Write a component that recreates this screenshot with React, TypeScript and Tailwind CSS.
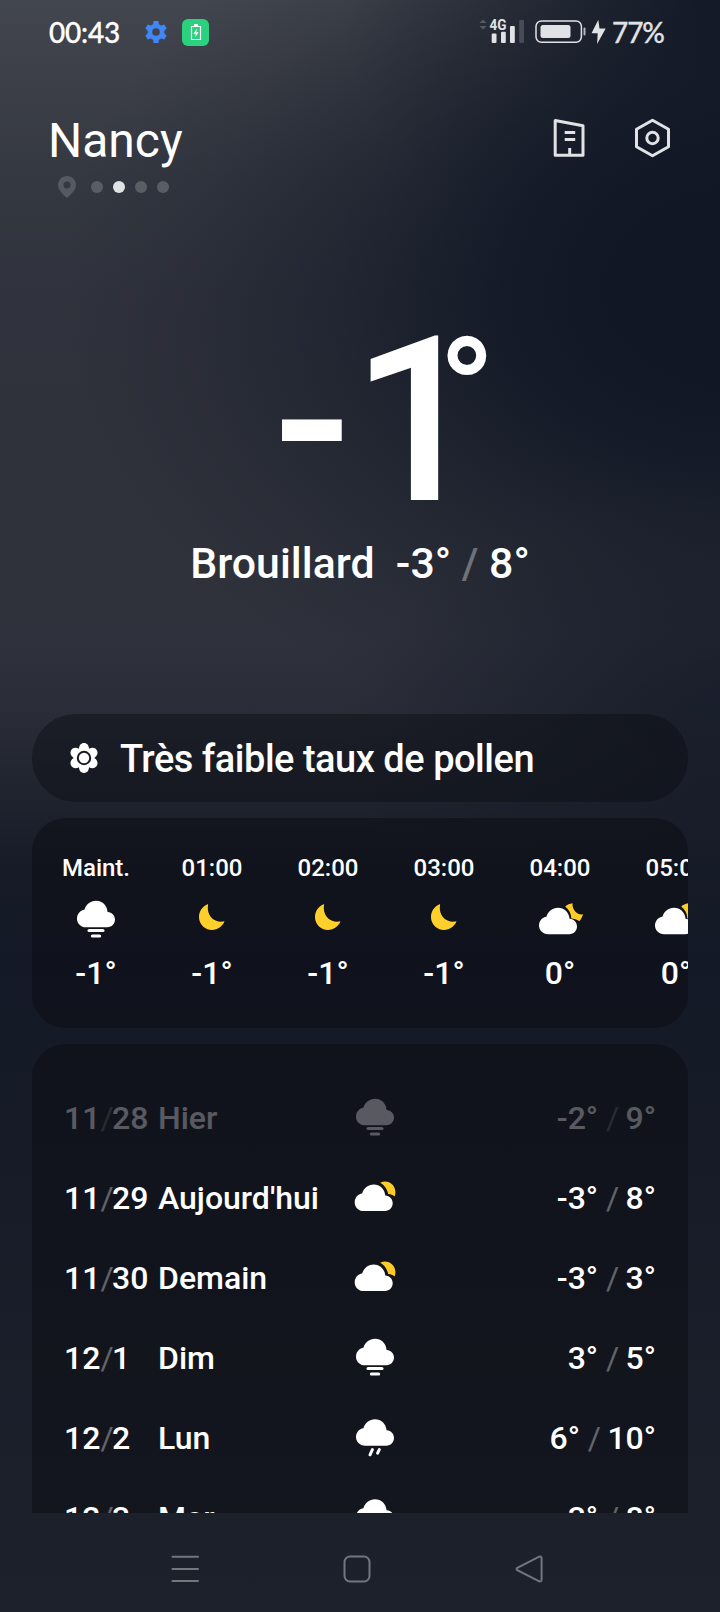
import type { ReactNode } from "react";

type IconKind = "fog" | "moon" | "cloudMoon" | "cloudSun" | "rain";

const CLOUD =
  "M9.2 26.5 C3.6 26.5 0 22.6 0 17.9 C0 13.1 3.2 9.6 7.4 9 C9.1 3.7 13.4 0 19 0 C25.2 0 30 4.6 30.6 11.1 C35.1 11.3 38 14.7 38 18.8 C38 23.2 34.6 26.5 30.4 26.5 Z";

function WeatherIcon({ kind }: { kind: IconKind }) {
  let body: ReactNode = null;
  if (kind === "fog") {
    body = (
      <g fill="#fff">
        <path d={CLOUD} transform="translate(5 4.8)" />
        <rect x="15.5" y="33.1" width="17" height="3" rx="1.5" />
        <rect x="18.8" y="38.6" width="10.4" height="3" rx="1.5" />
      </g>
    );
  } else if (kind === "moon") {
    body = (
      <path
        fill="#ffd02b"
        d="M20.1 8 C14.700 10 11 15.100 11 21 C11 28.300 16.800 34 24 34 C29.600 34 34.500 30.600 36.500 25.300 C28.300 27.500 17.800 21.500 20.100 8 Z"
      />
    );
  } else if (kind === "cloudMoon") {
    body = (
      <g>
        <path
          fill="#ffcb26"
          d="M29.200 10.600 C31.200 8.700 33.700 7.500 36.600 7.200 C35.800 12.800 40.500 19.300 47 18.300 C46.300 21 45 23.300 43.300 25.300 C41 23.200 38 22.600 35.300 22.500 C35.200 17.500 33 13.500 29.200 10.600 Z"
        />
        <path fill="#fff" d={CLOUD} transform="translate(3 11.700)" />
      </g>
    );
  } else if (kind === "cloudSun") {
    body = (
      <g>
        <path
          fill="#ffcb26"
          d="M29.200 8.700 C36.500 5.200 44.400 10.200 44.400 18.300 C44.400 19.800 44.200 21 43.800 22.500 C42 21 40 20.300 37.200 20.100 C36.200 15 33.500 11 29.200 8.700 Z"
        />
        <path fill="#fff" d={CLOUD} transform="translate(3.700 10.500)" />
      </g>
    );
  } else {
    body = (
      <g>
        <path fill="#fff" d={CLOUD} transform="translate(5 5.200)" />
        <path d="M21.400 35.600 L19 40.800 M28.300 35.600 L26.600 39.200" stroke="#fff" strokeWidth="3" strokeLinecap="round" />
      </g>
    );
  }
  return (
    <svg className="block h-12 w-12 shrink-0" viewBox="0 0 48 48" fill="none">
      {body}
    </svg>
  );
}

const hours: { time: string; icon: IconKind; temp: string }[] = [
  { time: "Maint.", icon: "fog", temp: "-1°" },
  { time: "01:00", icon: "moon", temp: "-1°" },
  { time: "02:00", icon: "moon", temp: "-1°" },
  { time: "03:00", icon: "moon", temp: "-1°" },
  { time: "04:00", icon: "cloudMoon", temp: "0°" },
  { time: "05:00", icon: "cloudMoon", temp: "0°" },
];

const days: { month: string; day: string; name: string; icon: IconKind; low: string; high: string; past?: boolean }[] = [
  { month: "11", day: "28", name: "Hier", icon: "fog", low: "-2°", high: "9°", past: true },
  { month: "11", day: "29", name: "Aujourd'hui", icon: "cloudSun", low: "-3°", high: "8°" },
  { month: "11", day: "30", name: "Demain", icon: "cloudSun", low: "-3°", high: "3°" },
  { month: "12", day: "1", name: "Dim", icon: "fog", low: "3°", high: "5°" },
  { month: "12", day: "2", name: "Lun", icon: "rain", low: "6°", high: "10°" },
  { month: "12", day: "3", name: "Mar", icon: "rain", low: "3°", high: "8°" },
];

function Backdrop() {
  return (
    <>
      <div className="absolute inset-0 bg-[linear-gradient(180deg,#42464e_0px,#3e4149_60px,#343841_180px,#30333d_300px,#2f323b_400px,#2f323c_640px,#2a2d38_710px,#20242f_790px,#161b27_870px,#131926_960px,#181c28_1200px,#1c202b_1500px,#1d212c_1612px)]" />
      <div className="absolute inset-0 bg-[radial-gradient(420px_240px_at_760px_740px,rgba(21,26,39,0.7)_20%,rgba(21,26,39,0.35)_60%,transparent_100%)]" />
      <div className="absolute inset-0 bg-[radial-gradient(420px_320px_at_760px_0px,rgba(20,26,38,0.9)_15%,rgba(20,26,38,0.35)_60%,transparent_100%)]" />
      <div className="absolute inset-0 bg-[radial-gradient(690px_480px_at_750px_290px,#111725_20%,rgba(16,22,36,0.85)_35%,rgba(16,22,36,0.45)_60%,rgba(16,22,36,0.16)_82%,transparent_100%)]" />
    </>
  );
}

function StatusBar() {
  return (
    <div className="flex h-16 items-center pl-[49px] font-[Lato,sans-serif]">
      <span className="w-[95px] text-[28px] leading-8 font-medium tracking-[-0.2px] text-white [-webkit-text-stroke:0.3px_#fff]">00:43</span>
      <svg className="h-6 w-6" viewBox="0 0 24 24">
        <path
          fill="#4285f4"
          fillRule="evenodd"
          d="M9.600 1 H14.400 L15 4.200 L17.200 5.500 L20.300 4.400 L22.700 8.600 L20.300 10.700 V13.300 L22.700 15.400 L20.300 19.600 L17.200 18.500 L15 19.800 L14.400 23 H9.600 L9 19.800 L6.800 18.500 L3.700 19.600 L1.300 15.400 L3.700 13.300 V10.700 L1.300 8.600 L3.700 4.400 L6.800 5.500 L9 4.200 Z M12 8.200 A3.800 3.800 0 1 0 12 15.800 A3.800 3.800 0 1 0 12 8.200 Z"
        />
      </svg>
      <span className="ml-[14px] flex h-[27px] w-[27px] items-center justify-center rounded-md bg-[#2bd17e]">
        <svg className="h-[18px] w-3" viewBox="0 0 12 18" fill="none">
          <path d="M1.500 3.500 H10.500 V16.500 H1.500 Z" stroke="#fff" strokeWidth="1.200" />
          <path d="M4 1 H8 V3 H4 Z M6.800 5.800 L3.400 10.700 H5.700 L5.200 14 L8.600 9.300 H6.300 Z" fill="#fff" />
        </svg>
      </span>
      <svg className="ml-[270px] h-7 w-[46px]" viewBox="0 0 46 28">
        <path d="M0.300 5 L4 1.400 L7.700 5 Z M0.300 8 L4 11.600 L7.700 8 Z" fill="#555a63" />
        <text x="10.500" y="12" fill="#e1e2e5" fontFamily="Roboto, sans-serif" fontSize="15.500" fontWeight="700" textLength="17" lengthAdjust="spacingAndGlyphs">
          4G
        </text>
        <rect x="12.700" y="15.500" width="4.800" height="9.500" rx="1" fill="#e1e2e5" />
        <rect x="22" y="13.800" width="4.800" height="11.200" rx="1" fill="#e1e2e5" />
        <rect x="31" y="8" width="4.800" height="17" rx="1" fill="#e1e2e5" />
        <rect x="40.200" y="2" width="4.800" height="23" rx="1" fill="#484c56" />
      </svg>
      <svg className="ml-[10px] h-7 w-[72px]" viewBox="0 0 72 28" fill="none">
        <rect x="1" y="2.900" width="45.400" height="21.400" rx="5.500" stroke="#e1e2e5" strokeWidth="1.500" />
        <rect x="5.500" y="7" width="30" height="13" rx="2.500" fill="#e1e2e5" />
        <rect x="48.500" y="9.500" width="2" height="8" rx="1" fill="#b5b7bc" />
        <path d="M63.300 1.800 L56.500 15.200 H62.700 L62.100 26 L70.700 10.500 H64.500 Z" fill="#e1e2e5" />
      </svg>
      <span className="ml-[5px] text-[28px] leading-8 font-medium tracking-[-1.100px] whitespace-nowrap text-[#e1e2e5] [-webkit-text-stroke:0.3px_#e1e2e5]">77%</span>
    </div>
  );
}

function Header() {
  return (
    <header className="flex h-[150px] justify-between pt-[49px] pr-12 pl-[46px]">
      <div>
        <h1 className="pl-0.5 text-[48px] leading-[56px] font-normal text-white">Nancy</h1>
        <div className="mt-[7px] flex items-center pl-3">
          <svg className="mr-[15px] h-[22px] w-[18px]" viewBox="0 0 18 22">
            <path
              fill="#555962"
              fillRule="evenodd"
              d="M9 0 C4 0 0 3.900 0 8.900 C0 13.400 3.900 17.300 9 22 C14.100 17.300 18 13.400 18 8.900 C18 3.900 14 0 9 0 Z M9 5.500 A3.500 3.500 0 1 1 9 12.500 A3.500 3.500 0 1 1 9 5.500 Z"
            />
          </svg>
          <div className="flex gap-[10px]">
            <i className="h-3 w-3 rounded-full bg-[#595d66]" />
            <i className="h-3 w-3 rounded-full bg-[#e1e2e3]" />
            <i className="h-3 w-3 rounded-full bg-[#595d66]" />
            <i className="h-3 w-3 rounded-full bg-[#595d66]" />
          </div>
        </div>
      </div>
      <div className="flex gap-[46px] pt-[4px]">
        <svg className="h-[42px] w-9" viewBox="0 0 36 42" fill="none" stroke="#e1e2e5" strokeWidth="3">
          <path d="M3.200 3.600 L31 8.700 V38.300 H3.200 Z" strokeLinejoin="round" />
          <path d="M12.700 15.500 H23.200 M12.700 22.500 H23.200 M17.700 38 V31" />
        </svg>
        <svg className="h-[42px] w-[38px]" viewBox="0 0 38 42" fill="none" stroke="#e1e2e5" strokeWidth="3">
          <path d="M18.500 3.300 L34.500 12.200 V29.800 L18.500 38.700 L2.500 29.800 V12.200 Z" strokeLinejoin="round" />
          <circle cx="18.500" cy="21" r="5.700" />
        </svg>
      </div>
    </header>
  );
}

function Slash() {
  return <span className="font-normal tracking-[-0.05em] text-white/35">/</span>;
}

export default function App() {
  return (
    <div className="relative isolate flex h-[1612px] w-[720px] flex-col overflow-hidden bg-[#161b27] font-[Roboto,sans-serif] font-medium text-white">
      <div className="absolute inset-0 -z-10">
        <Backdrop />
      </div>
      <StatusBar />
      <Header />

      <section className="flex h-[500px] shrink-0 flex-col items-center pt-[71px]">
        <div className="flex h-[272px] items-start pl-[36px] whitespace-nowrap">
          <span className="text-[231px] leading-[273px]">-1</span>
          <span className="-ml-[45px] w-[45px] text-[151px] leading-[215px]">°</span>
        </div>
        <div className="-mt-[19px] text-[42.8px] leading-[50px] whitespace-pre">
          Brouillard&nbsp; -3° <span className="text-white/35">/</span> 8°
        </div>
      </section>

      <main className="mx-8 flex h-[799px] shrink-0 flex-col gap-4 overflow-hidden">
        <section className="flex h-[88px] shrink-0 items-center rounded-full bg-[#0c0e12]/45 pl-9">
          <svg className="h-8 w-8" viewBox="0 0 32 32" fill="#fff">
            <path
              fillRule="evenodd"
              d="M16 1 C19 1 20.900 3.300 21 6.700 C24 5.200 27.300 5.600 28.800 8.200 C30.400 11 29.300 14.100 26.300 16 C29.300 17.900 30.400 21 28.800 23.800 C27.300 26.400 24 26.800 21 25.300 C20.900 28.700 19 31 16 31 C13 31 11.100 28.700 11 25.300 C8 26.800 4.700 26.400 3.200 23.800 C1.600 21 2.700 17.900 5.700 16 C2.700 14.100 1.600 11 3.200 8.200 C4.700 5.600 8 5.200 11 6.700 C11.100 3.300 13 1 16 1 Z M16 8.800 A7.200 7.200 0 1 0 16 23.200 A7.200 7.200 0 1 0 16 8.800 Z"
            />
            <circle cx="16" cy="16" r="5.200" />
          </svg>
          <span className="mt-0.5 ml-5 text-[38px] leading-[44px] tracking-[-0.480px]">Très faible taux de pollen</span>
        </section>

        <section className="flex h-[210px] shrink-0 overflow-hidden rounded-[34px] bg-[#0c0c12]/50 pt-[36px] pl-[6px]">
          {hours.map((h) => (
            <div key={h.time} className="flex w-[116px] shrink-0 flex-col items-center">
              <span className="text-[24px] leading-7">{h.time}</span>
              <div className="mt-[14px]">
                <WeatherIcon kind={h.icon} />
              </div>
              <span className="mt-[10px] text-[32px] leading-[38px]">{h.temp}</span>
            </div>
          ))}
        </section>

        <section className="h-[620px] shrink-0 rounded-t-[34px] bg-[#0c0c12]/50 pt-[34px] pr-8 pl-8">
          {days.map((d) => (
            <div
              key={d.month + d.day}
              className={
                d.past
                  ? "grid h-20 grid-cols-[94px_193px_48px_1fr] items-center text-[32px] leading-[38px] opacity-30"
                  : "grid h-20 grid-cols-[94px_193px_48px_1fr] items-center text-[32px] leading-[38px]"
              }
            >
              <span className="whitespace-nowrap">
                {d.month}
                <Slash />
                {d.day}
              </span>
              <span className="whitespace-nowrap">{d.name}</span>
              <WeatherIcon kind={d.icon} />
              <span className="text-right whitespace-nowrap">
                {d.low} <Slash /> {d.high}
              </span>
            </div>
          ))}
        </section>
      </main>

      <nav className="flex h-[99px] shrink-0 items-center gap-36 pt-3 pl-[171px]">
        <svg className="h-7 w-7" viewBox="0 0 28 28" stroke="#74767e" strokeWidth="2" strokeLinecap="round">
          <path d="M1.500 1.700 H27 M1.500 14 H27 M1.500 26 H27" />
        </svg>
        <svg className="h-7 w-7" viewBox="0 0 28 28" fill="none" stroke="#74767e" strokeWidth="2">
          <rect x="1.500" y="1.500" width="25" height="25" rx="5.500" />
        </svg>
        <svg className="h-7 w-7" viewBox="0 0 28 28" fill="none" stroke="#74767e" strokeWidth="2">
          <path d="M2.300 12.800 L24.200 1.700 Q26.600 1 26.600 3.400 V24.600 Q26.600 27 24.200 26.300 L2.300 15.200 Q0.800 14 2.300 12.800 Z" />
        </svg>
      </nav>
    </div>
  );
}
